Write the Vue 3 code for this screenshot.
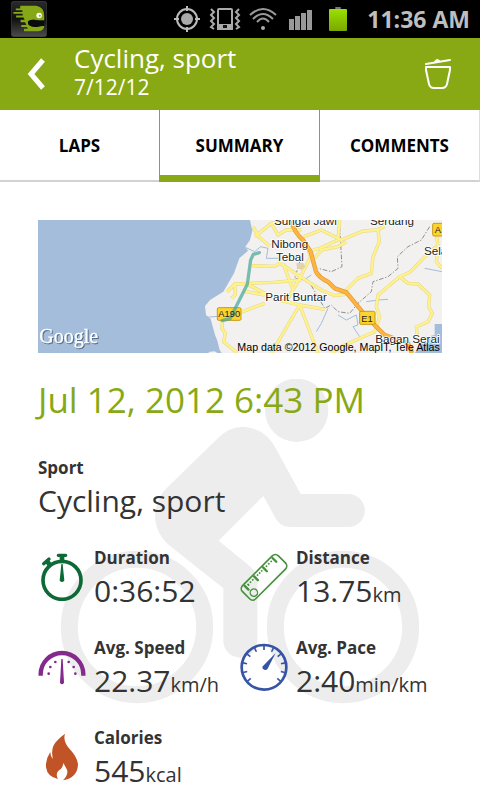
<template>
    <div class="screen">
        <div class="status-bar">
            <svg class="app-logo" viewBox="0 0 105 105" aria-hidden="true">
                <defs>
                    <linearGradient id="logo-bg" x1="0" y1="0" x2="0" y2="1">
                        <stop offset="0" stop-color="#2a2a2a" />
                        <stop offset="0.5" stop-color="#111" />
                        <stop offset="1" stop-color="#4c4c4c" />
                    </linearGradient>
                </defs>
                <rect x="1" y="1" width="103" height="103" rx="8" fill="url(#logo-bg)" stroke="#444" stroke-width="2" />
                <path
                    d="M27 14H74Q97 18 97 44V57H80Q62 52 51 58Q47 63 52 70Q62 77 76 76Q86 72 97 73Q96 87 80 88H38V81H50L46 76H30V70H45L41 62H28V55H40L36 48H15V42H34V37H7V32H33V27H14V22H27Z"
                    fill="#86a816"
                />
                <path d="M50 59Q62 52 80 57H97V73Q86 72 76 76Q60 77 52 70Q48 64 50 59Z" fill="#0b0b0b" />
                <circle cx="82" cy="42" r="8" fill="#fff" />
                <circle cx="84" cy="43" r="3" fill="#86a816" />
            </svg>
            <div class="status-icons">
                <svg class="status-gps" viewBox="0 0 26 26" aria-hidden="true">
                    <circle cx="13" cy="13" r="10" fill="none" stroke="#bbb" stroke-width="2" />
                    <circle cx="13" cy="13" r="6" fill="#aaa" />
                    <path d="M13 0V5M13 21V26M0 13H5M21 13H26" stroke="#bbb" stroke-width="2" />
                </svg>
                <svg class="status-vibrate" viewBox="0 0 32 24" aria-hidden="true">
                    <rect x="9" y="2" width="14" height="20" rx="1" fill="none" stroke="#aaa" stroke-width="2" />
                    <path d="M8 17H24V23H8Z" fill="#aaa" />
                    <path d="M14 18H18V21H14Z" fill="#111" />
                    <path
                        d="M2 2L5 5L2 8L5 11L2 14L5 17L2 20L5 22M30 2L27 5L30 8L27 11L30 14L27 17L30 20L27 22"
                        fill="none"
                        stroke="#aaa"
                        stroke-width="2"
                    />
                </svg>
                <svg class="status-wifi" viewBox="0 0 28 24" aria-hidden="true">
                    <g fill="none" stroke="#999" stroke-width="2">
                        <path d="M1 8Q14 -4 27 8" />
                        <path d="M4 12Q14 2 24 12" />
                        <path d="M8 15Q14 8 20 15" />
                    </g>
                    <circle cx="14" cy="21" r="2" fill="#aaa" />
                </svg>
                <svg class="status-signal" viewBox="0 0 24 24" aria-hidden="true">
                    <path d="M0 12H5V23H0ZM6 9H11V23H6ZM12 6H17V23H12ZM18 3H23V23H18Z" fill="#999" />
                </svg>
                <svg class="status-battery" viewBox="0 0 18 24" aria-hidden="true">
                    <defs>
                        <linearGradient id="charge" x1="0" y1="0" x2="0" y2="1">
                            <stop offset="0" stop-color="#9be000" />
                            <stop offset="1" stop-color="#79a800" />
                        </linearGradient>
                    </defs>
                    <rect x="6" y="0" width="6" height="2" rx="1" fill="#777" />
                    <rect x="0" y="2" width="18" height="22" rx="1" fill="url(#charge)" />
                </svg>
            </div>
            <time class="clock">11:36 AM</time>
        </div>

        <header class="title-bar">
            <button class="icon-button" type="button" aria-label="Back">
                <svg class="back-icon" viewBox="0 0 18 32" aria-hidden="true">
                    <path d="M16 2L4 16L16 30" fill="none" stroke="#fff" stroke-width="5" />
                </svg>
            </button>
            <div class="title-text">
                <h1 class="title">Cycling, sport</h1>
                <p class="subtitle">7/12/12</p>
            </div>
            <button class="icon-button trash-button" type="button" aria-label="Delete">
                <svg class="trash-icon" viewBox="0 0 28 32" aria-hidden="true">
                    <g fill="none" stroke="#fff" stroke-width="2" stroke-linecap="round" stroke-linejoin="round">
                        <path d="M2 6L26 2M11 4L13 2L15 3" />
                        <path d="M2 9H26V12L23 26Q22 30 18 30H10Q6 30 5 26L2 12Z" />
                    </g>
                </svg>
            </button>
        </header>

        <nav class="tabs">
            <button
                v-for="tab in tabs"
                :key="tab"
                type="button"
                class="tab"
                :class="{ active: tab === activeTab }"
                @click="activeTab = tab"
            >
                {{ tab }}
            </button>
        </nav>

        <main class="content">
            <svg class="map" viewBox="0 0 1212 399" preserveAspectRatio="xMidYMid slice" role="img" aria-label="Route map">
                <rect width="1212" height="399" fill="#a3bddb" />
                <path
                    d="M636 0L643 32L636 60L622 80L630 92L604 115L588 160L556 215L516 240L501 258L504 285L518 297L531 345L538 362L545 390L551 399H1212V0Z"
                    fill="#f2f1f0"
                />
                <path d="M510 399L516 395L530 394L538 399Z" fill="#f2f1f0" />
                <path d="M1130 399L1150 375V350H1165L1190 345V312H1212V399Z" fill="#a3bddb" />
                <g fill="none" stroke="#a3bddb" stroke-width="3">
                    <path d="M624 83L650 95L668 80L690 85L685 115L730 115M820 165L805 175L780 180" />
                    <path d="M870 265L850 310L835 335M900 285L925 300L955 285L960 315L945 320L965 350M985 245L1020 240L1050 238M1160 145L1212 155M505 292L560 287" />
                </g>
                <g fill="none" stroke="#909090" stroke-width="3" stroke-dasharray="14 5 4 5">
                    <path d="M905 20L912 140L880 155L840 145" />
                    <path d="M1175 20L1150 60L1110 80L1078 110L1080 145L1050 170L1005 185L1000 215L960 250L935 280L900 275L880 255L860 265L810 180L770 175L790 110" />
                </g>
                <g class="roads-casing">
                    <path v-for="road in roads" :key="road" :d="road" />
                </g>
                <g class="roads">
                    <path v-for="road in roads" :key="road" :d="road" />
                </g>
                <path class="highway-casing" :d="highway" />
                <path class="highway" :d="highway" />
                <path d="M775 130L795 128L803 140L790 150L777 145Z" fill="#e3d3a8" />
                <g class="shields">
                    <rect x="538" y="263" width="71" height="38" rx="4" />
                    <rect x="965" y="274" width="46" height="39" rx="4" />
                    <rect x="1184" y="10" width="50" height="38" rx="4" />
                </g>
                <path
                    d="M664 98L646 103L638 120L628 193L576 296L553 302"
                    fill="none"
                    stroke="#45a596"
                    stroke-opacity="0.7"
                    stroke-width="10"
                    stroke-linejoin="round"
                    stroke-linecap="round"
                />
                <g class="shield-labels">
                    <text x="541" y="292">A190</text>
                    <text x="970" y="305">E1</text>
                    <text x="1190" y="40">A1</text>
                </g>
                <g class="places">
                    <text x="708" y="16">Sungai Jawi</text>
                    <text x="996" y="15">Serdang</text>
                    <text x="700" y="85">Nibong</text>
                    <text x="714" y="123">Tebal</text>
                    <text x="682" y="243">Parit Buntar</text>
                    <text x="1158" y="104">Selama</text>
                    <text x="1012" y="369">Bagan Serai</text>
                </g>
                <text class="map-credit" x="598" y="393">Map data ©2012 Google, MapIT, Tele Atlas</text>
                <text class="map-brand" x="4" y="370">Google</text>
            </svg>

            <svg class="cyclist" viewBox="90 27 1080 975" aria-hidden="true">
                <circle cx="800" cy="121" r="95" />
                <path
                    d="M375 440Q376 385 414 350L565 203Q597 171 640 170Q708 174 740 240L812 372H955A49 49 0 0 1 955 471H780Q751 470 738 447L700 378L566 512L656 586Q682 605 682 640V812A51 51 0 0 1 580 812V655L425 532Q378 495 375 440Z"
                />
                <circle class="wheel" cx="321" cy="771" r="203" />
                <circle class="wheel" cx="939" cy="771" r="203" />
            </svg>

            <div class="details">
                <h2 class="date">Jul 12, 2012 6:43 PM</h2>
                <dl class="sport">
                    <dt class="label">Sport</dt>
                    <dd class="value">Cycling, sport</dd>
                </dl>
                <div class="stats">
                    <div v-for="stat in stats" :key="stat.label" class="stat">
                        <svg v-if="stat.icon === 'stopwatch'" class="stat-icon" viewBox="0 0 144 144" aria-hidden="true">
                            <g fill="none" stroke="#0d6a37">
                                <circle cx="72" cy="82" r="57" stroke-width="11" />
                                <path d="M61 7H83M17 32L33 18" stroke-width="10" stroke-linecap="round" />
                                <path d="M72 8V24M28 26L38 38" stroke-width="14" />
                            </g>
                            <path d="M72 34L67 82Q72 88 77 82Z" fill="#0d6a37" stroke="#0d6a37" stroke-width="4" stroke-linejoin="round" />
                        </svg>
                        <svg v-else-if="stat.icon === 'ruler'" class="stat-icon" viewBox="0 0 144 144" aria-hidden="true">
                            <g transform="rotate(-45 72 73)" fill="none" stroke="#46913d">
                                <rect x="-4" y="45" width="152" height="56" rx="13" stroke-width="5" />
                                <circle cx="18" cy="84" r="11" stroke-width="4" />
                                <path d="M13 50V66M53 50V66M91 50V66M131 50V66" stroke-width="7" stroke-linecap="round" />
                                <path d="M23 52V59M33 52V57M43 52V57M63 52V57M72 52V57M81 52V57M101 52V57M111 52V57M121 52V57" stroke-width="5" />
                            </g>
                        </svg>
                        <svg v-else-if="stat.icon === 'speed'" class="stat-icon" viewBox="0 0 144 144" aria-hidden="true">
                            <path d="M8 98V94A64 64 0 0 1 136 94V98" fill="none" stroke="#832a8c" stroke-width="13" />
                            <path d="M72 48L68 119Q72 125 76 119Z" fill="#832a8c" stroke="#832a8c" stroke-width="4" />
                            <g fill="#832a8c">
                                <circle v-for="dot in speedDots" :key="dot[0]" :cx="dot[0]" :cy="dot[1]" r="4" />
                            </g>
                        </svg>
                        <svg v-else-if="stat.icon === 'pace'" class="stat-icon" viewBox="0 0 144 144" aria-hidden="true">
                            <g fill="none" stroke="#3653a5">
                                <circle cx="72" cy="73" r="67" stroke-width="8" />
                                <path
                                    v-for="angle in paceTicks"
                                    :key="angle"
                                    d="M72 9V21"
                                    stroke-width="5"
                                    :transform="`rotate(${angle} 72 73)`"
                                />
                            </g>
                            <path d="M107 30L82 79Q76 84 68 77L67 71Z" fill="#3653a5" />
                        </svg>
                        <svg v-else class="stat-icon" viewBox="0 0 144 144" aria-hidden="true">
                            <path
                                d="M81 2Q74 23 93 46Q119 73 120 95Q118 134 75 142Q92 125 87 110L76 90Q75 105 63 112Q51 121 60 138Q28 132 24 103Q22 80 37 56Q36 69 45 78Q36 43 57 23Q67 12 81 2Z"
                                fill="#c15427"
                            />
                        </svg>
                        <dl class="stat-text">
                            <dt class="label">{{ stat.label }}</dt>
                            <dd class="value">{{ stat.value }}<span class="unit">{{ stat.unit }}</span></dd>
                        </dl>
                    </div>
                </div>
            </div>
        </main>
    </div>
</template>

<script setup>
import { ref } from "vue";

const tabs = ["LAPS", "SUMMARY", "COMMENTS"];
const activeTab = ref("SUMMARY");

const stats = [
    { icon: "stopwatch", label: "Duration", value: "0:36:52", unit: "" },
    { icon: "ruler", label: "Distance", value: "13.75", unit: "km" },
    { icon: "speed", label: "Avg. Speed", value: "22.37", unit: "km/h" },
    { icon: "pace", label: "Avg. Pace", value: "2:40", unit: "min/km" },
    { icon: "flame", label: "Calories", value: "545", unit: "kcal" },
];

const speedDots = [
    [32, 92],
    [37, 72],
    [52, 57],
    [92, 57],
    [107, 72],
    [112, 92],
];

const paceTicks = [-130, -104, -78, -52, -26, 0, 26, 52, 78, 104, 130];

const highway = "M758 0Q770 40 795 60L818 95L834 155Q845 175 870 185L890 205L925 217L985 290L1040 345L1110 370L1122 399";

const roads = [
    "M645 20L662 50L695 78M650 50L700 10L735 5M700 10L720 45L745 30L790 30",
    "M642 137L710 139L725 130L742 140L765 155L790 172L850 210L890 227L930 222",
    "M567 215L578 205L590 192L705 187L790 180M590 192L592 225L580 235",
    "M628 193L720 240L785 255L860 268M615 213L680 225",
    "M600 280L680 250M750 235L785 175L818 110L805 70",
    "M735 130L765 210M785 255L840 399",
    "M785 255L700 399",
    "M553 302L552 325L562 340L557 365L598 399",
    "M798 50L850 30L910 60L975 33L1020 30L1040 18M830 115L850 90L900 80L925 65",
    "M1020 30L1024 65L1005 110L1000 160L960 175L915 220",
    "M1195 80L1175 95L1115 157L1085 170L1020 225L1015 260L1025 290L1010 335L920 375L880 399",
    "M1085 170L1110 190L1140 192L1175 225L1172 260L1183 280L1170 305L1135 320L1138 355",
    "M1195 40L1200 80L1195 125L1212 145M905 0L900 60L845 85L825 90",
];
</script>

<style>
body {
    margin: 0;
    background: #fff;
}
</style>

<style scoped>
.screen {
    min-height: 100vh;
    background: #fff;
    color: #333;
    font-family: "Open Sans", "Noto Sans", sans-serif;
}

.status-bar {
    display: flex;
    align-items: center;
    height: 38px;
    padding: 0 10px 0 11px;
    background: #000;
}

.app-logo {
    width: 36px;
    height: 36px;
}

.status-icons {
    display: flex;
    align-items: center;
    gap: 12px;
    margin-left: auto;
}

.status-gps {
    width: 26px;
    height: 26px;
}

.status-vibrate {
    width: 32px;
    height: 24px;
    margin-right: -4px;
    margin-left: -3px;
}

.status-wifi {
    width: 28px;
    height: 24px;
}

.status-signal {
    width: 24px;
    height: 24px;
}

.status-battery {
    width: 18px;
    height: 24px;
    margin-left: 4px;
}

.clock {
    margin-left: 20px;
    color: #bebebe;
    font-size: 23px;
    font-weight: 700;
    line-height: 38px;
}

.title-bar {
    display: flex;
    align-items: center;
    height: 72px;
    background: #88a914;
    color: #fff;
}

.icon-button {
    display: flex;
    align-items: center;
    justify-content: center;
    width: 72px;
    height: 72px;
    padding: 0;
    border: 0;
    background: none;
}

.trash-button {
    width: 84px;
}

.back-icon {
    width: 18px;
    height: 32px;
}

.trash-icon {
    width: 28px;
    height: 32px;
}

.title-text {
    flex: 1;
    min-width: 0;
    padding-bottom: 8px;
    padding-left: 2px;
}

.title {
    margin: 0;
    font-size: 26px;
    font-weight: 400;
    line-height: 34px;
}

.subtitle {
    margin: 0;
    font-size: 21px;
    line-height: 24px;
}

.tabs {
    display: grid;
    grid-template-columns: repeat(3, 1fr);
    height: 72px;
}

.tab {
    padding: 0;
    border: 0;
    border-right: 1px solid #ddd;
    border-bottom: 2px solid #d2d2d2;
    background: #fff;
    color: #000;
    font-family: inherit;
    font-size: 17px;
    font-weight: 700;
}

.tab.active {
    margin-left: -1px;
    padding-top: 5px;
    border-right: 1px solid #88a914;
    border-bottom: 7px solid #88a914;
    border-left: 1px solid #88a914;
}

.content {
    position: relative;
    padding: 38px;
    padding-bottom: 8px;
}

.map {
    display: block;
    width: 100%;
    height: 133px;
    font-family: "Liberation Sans", sans-serif;
}

.roads,
.roads-casing,
.highway,
.highway-casing {
    fill: none;
    stroke-linejoin: round;
}

.roads-casing {
    stroke: #e4d68b;
    stroke-width: 10px;
}

.roads {
    stroke: #fff28a;
    stroke-width: 7px;
}

.highway-casing {
    stroke: #dd9b35;
    stroke-width: 13px;
}

.highway {
    stroke: #ffb340;
    stroke-width: 9px;
}

.shields {
    fill: #fdd32d;
    stroke: #c79a16;
    stroke-width: 3px;
}

.shield-labels {
    fill: #222;
    font-size: 28px;
}

.places {
    fill: #222;
    stroke: #fff;
    stroke-width: 5px;
    paint-order: stroke;
    font-size: 35px;
}

.map-credit {
    fill: #000;
    font-size: 32px;
}

.map-brand {
    fill: #fff;
    stroke: #fff;
    stroke-width: 1px;
    font-family: "Liberation Serif", serif;
    font-size: 60px;
    filter: drop-shadow(3px 3px 2px #556b85);
}

.cyclist {
    position: absolute;
    top: 197px;
    left: 60px;
    width: 360px;
    height: 325px;
    fill: #ededed;
}

.wheel {
    fill: none;
    stroke: #ededed;
    stroke-width: 51px;
}

.details {
    position: relative;
}

.date {
    margin: 23px 0 0;
    color: #88a914;
    font-size: 35px;
    font-weight: 400;
    line-height: 48px;
}

.sport {
    margin: 32px 0 0;
}

.label {
    font-size: 17px;
    font-weight: 700;
    line-height: 24px;
}

.value {
    margin: 0;
    font-size: 30px;
    line-height: 42px;
}

.unit {
    font-size: 20px;
    line-height: 1;
}

.stats {
    display: grid;
    grid-template-columns: repeat(2, 1fr);
    row-gap: 24px;
    margin-top: 24px;
}

.stat {
    display: flex;
    align-items: flex-start;
    gap: 8px;
    white-space: nowrap;
}

.stat-icon {
    flex: none;
    width: 48px;
    height: 48px;
    margin-top: 7px;
}

.stat-text {
    margin: 0;
}
</style>
